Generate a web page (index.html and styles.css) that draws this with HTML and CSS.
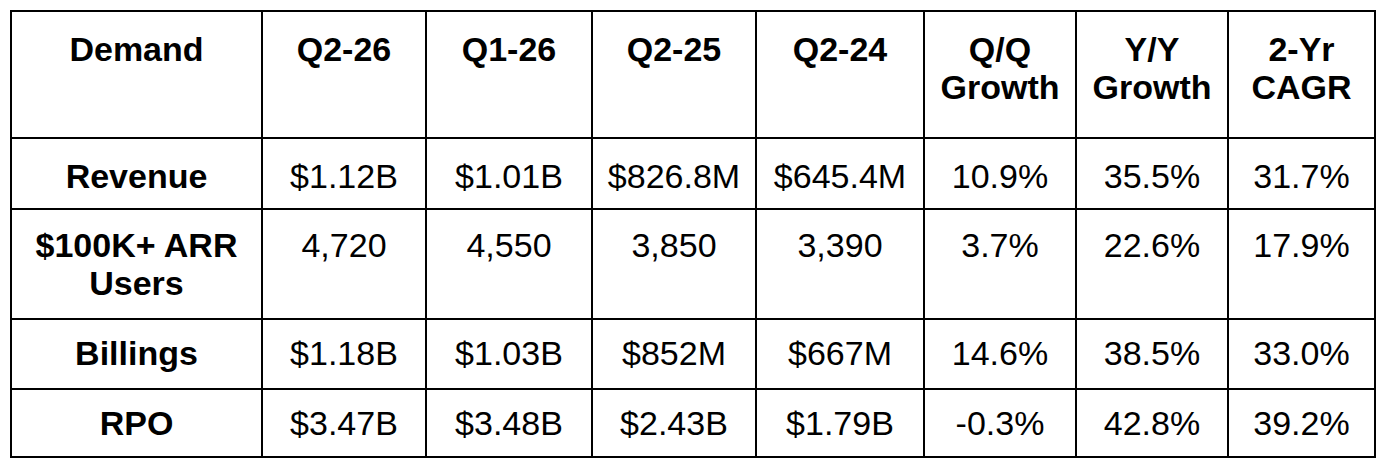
FILE: index.html
```html
<!DOCTYPE html>
<html lang="en">
<head>
<meta charset="utf-8">
<title>Demand</title>
<link rel="stylesheet" href="styles.css">
</head>
<body>
<div class="table">
  <div class="row head">
    <div class="cell">Demand</div>
    <div class="cell">Q2-26</div>
    <div class="cell">Q1-26</div>
    <div class="cell">Q2-25</div>
    <div class="cell">Q2-24</div>
    <div class="cell">Q/Q<br>Growth</div>
    <div class="cell">Y/Y<br>Growth</div>
    <div class="cell">2-Yr<br>CAGR</div>
  </div>
  <div class="row r1">
    <div class="cell label">Revenue</div>
    <div class="cell">$1.12B</div>
    <div class="cell">$1.01B</div>
    <div class="cell">$826.8M</div>
    <div class="cell">$645.4M</div>
    <div class="cell">10.9%</div>
    <div class="cell">35.5%</div>
    <div class="cell">31.7%</div>
  </div>
  <div class="row r2">
    <div class="cell label">$100K+ ARR<br>Users</div>
    <div class="cell">4,720</div>
    <div class="cell">4,550</div>
    <div class="cell">3,850</div>
    <div class="cell">3,390</div>
    <div class="cell">3.7%</div>
    <div class="cell">22.6%</div>
    <div class="cell">17.9%</div>
  </div>
  <div class="row r3">
    <div class="cell label">Billings</div>
    <div class="cell">$1.18B</div>
    <div class="cell">$1.03B</div>
    <div class="cell">$852M</div>
    <div class="cell">$667M</div>
    <div class="cell">14.6%</div>
    <div class="cell">38.5%</div>
    <div class="cell">33.0%</div>
  </div>
  <div class="row r4">
    <div class="cell label">RPO</div>
    <div class="cell">$3.47B</div>
    <div class="cell">$3.48B</div>
    <div class="cell">$2.43B</div>
    <div class="cell">$1.79B</div>
    <div class="cell">-0.3%</div>
    <div class="cell">42.8%</div>
    <div class="cell">39.2%</div>
  </div>
</div>
</body>
</html>
```

FILE: styles.css
```css
html, body {
  margin: 0;
  padding: 0;
  background: #fff;
}

body {
  font-family: "Liberation Sans", Arial, sans-serif;
  font-size: 34px;
  line-height: 38px;
  color: #000;
}

.table {
  display: grid;
  grid-template-columns: 249px 162px 164px 162px 166px 150px 150px 145px;
  grid-template-rows: 125px 69px 108px 68px 66px;
  gap: 2px;
  padding: 2px;
  background: #000;
  width: max-content;
  margin: 10px 0 0 10px;
}

.row {
  display: contents;
}

.cell {
  background: #fff;
  text-align: center;
  white-space: nowrap;
}

.head .cell {
  font-weight: bold;
  padding-top: 18px;
}

.r1 .cell {
  padding-top: 18px;
}

.r2 .cell {
  padding-top: 16px;
}

.r3 .cell,
.r4 .cell {
  padding-top: 14px;
}

.label {
  font-weight: bold;
}
```
